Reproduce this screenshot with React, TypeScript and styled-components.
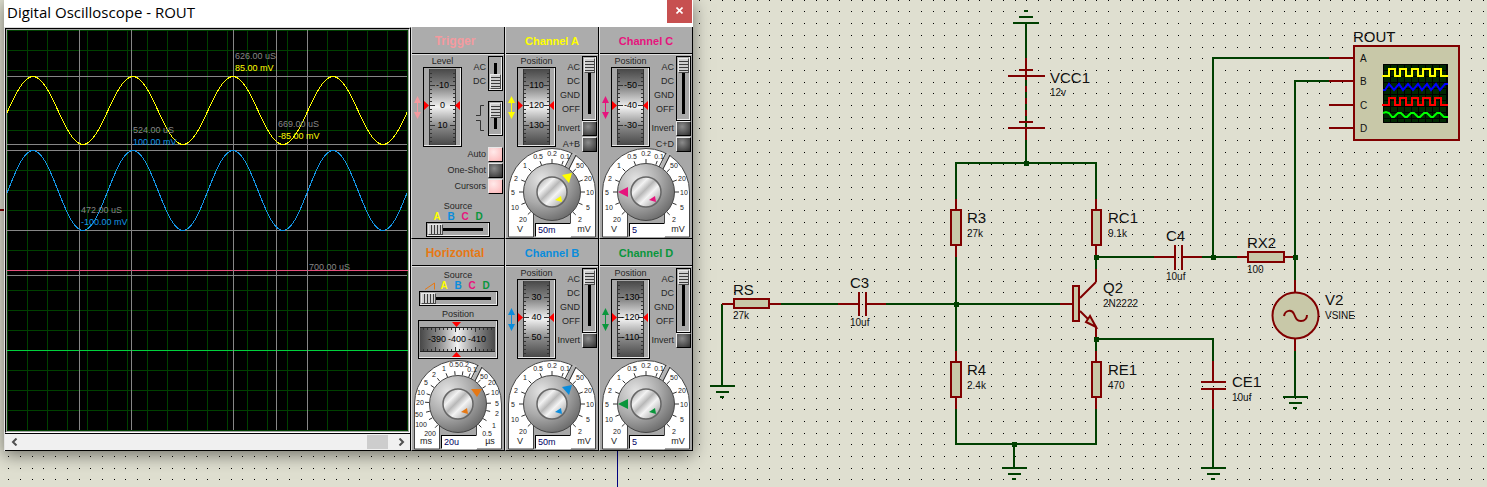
import React from "react";
import styled, { createGlobalStyle, css } from "styled-components";

const WIRE = "#004000";
const PART = "#800000";
const FILL = "#c8c8a8";

const COLORS = {
  trigger: "#f49a9f",
  horizontal: "#e67814",
  a: "#ffff00",
  b: "#0a8cdc",
  c: "#e6147d",
  d: "#0a963c",
};

const GlobalStyle = createGlobalStyle`
  * { box-sizing: border-box; }
  body {
    margin: 0;
    background: #dfdfd0;
    font-family: "Liberation Sans", Arial, sans-serif;
  }
  button, input { font-family: inherit; }
`;

/* ---------- Desktop and window ---------- */

const Desk = styled.main`
  position: relative;
  min-height: 100vh;
  overflow: hidden;
`;

const Sheet = styled.svg`
  position: absolute;
  inset: 0;
  width: 100%;
  height: 100%;
  font-family: "Liberation Sans", Arial, sans-serif;
`;

const Window = styled.section`
  position: absolute;
  left: 4px;
  top: 0;
  background: #ffffff;
  box-shadow: 0 4px 16px rgba(0, 0, 0, 0.5);
`;

const TitleBar = styled.header`
  display: flex;
  justify-content: space-between;
  height: 27px;
`;

const Title = styled.h1`
  margin: 0;
  padding-left: 3px;
  font: 400 15px/24px "Open Sans", "Noto Sans", sans-serif;
  color: #000;
`;

const CloseButton = styled.button`
  width: 25px;
  height: 23px;
  margin-right: 1px;
  padding: 0 0 2px;
  border: 0;
  background: #c75050;
  display: grid;
  place-items: center;
`;

const WindowBody = styled.div`
  display: flex;
`;

const ScopeColumn = styled.div`
  border-left: 1px solid #e3e3e3;
  border-right: 1px solid #000;
  border-top: 1px solid #dcdcdc;
`;

const ScreenFrame = styled.div`
  border: 1px solid #fff;
  border-top-color: #000;
  border-left-color: #000;
`;

const ScreenSvg = styled.svg`
  display: block;
  box-sizing: content-box;
  width: 401px;
  height: 401px;
  border: 1px solid #a0a0a0;
  background: #000;
  font-size: 9px;
`;

const ScrollBar = styled.div`
  display: flex;
  height: 18px;
  border-top: 1px solid #000;
  border-bottom: 1px solid #000;
  background: #f0f0f0;
`;

const ScrollArrow = styled.button`
  width: 18px;
  padding: 0;
  border: 0;
  background: none;
  display: grid;
  place-items: center;
`;

const ScrollTrack = styled.div`
  flex: 1;
  display: flex;
  justify-content: flex-end;
  padding: 1px 4px;
`;

const ScrollThumb = styled.div`
  width: 21px;
  background: #cdcdcd;
`;

/* ---------- Control panels ---------- */

const Panels = styled.div`
  display: grid;
  grid-template-columns: repeat(3, 94px);
`;

const PanelBox = styled.section`
  display: flex;
  flex-direction: column;
  height: 212px;
  border-left: 1px solid #dedede;
  border-right: 1px solid #000;
  border-bottom: 1px solid #000;
  background: #a8a8a8;
`;

const PanelTitle = styled.h2<{ $color: string; $wide?: boolean }>`
  margin: 0;
  height: 27px;
  padding: 2px ${(p) => (p.$wide ? 6 : 0)}px 0 0;
  border-bottom: 1px solid #000;
  background: #acacac;
  color: ${(p) => p.$color};
  font-size: ${(p) => (p.$wide ? 12 : 11)}px;
  line-height: 25px;
  text-align: center;
`;

const PanelBody = styled.div`
  flex: 1;
  display: flex;
  flex-direction: column;
  border-top: 1px solid #dedede;
`;

const TopRow = styled.div`
  display: flex;
  justify-content: space-between;
  height: 92px;
  padding: 0 1px 0 2px;
`;

const WheelGroup = styled.div`
  display: grid;
  grid-template-columns: 7px 39px;
  grid-template-rows: 12px 80px;
  column-gap: 2px;
  align-items: center;
`;

const Caption = styled.div`
  height: 12px;
  font-size: 9px;
  line-height: 12px;
  color: #262626;
  text-align: center;
  grid-column: 2;
`;

const WheelFrame = styled.div<{ $wide?: boolean }>`
  position: relative;
  width: ${(p) => (p.$wide ? 80 : 39)}px;
  height: ${(p) => (p.$wide ? 39 : 80)}px;
  border: 1px solid #000;
  box-shadow: inset -1px -1px 0 #e8e8e8;
  svg { display: block; font-size: 9px; }
`;

const HiddenRange = styled.input`
  position: absolute;
  inset: 0;
  width: 100%;
  height: 100%;
  margin: 0;
  opacity: 0;
`;

const Arrows = styled.svg`
  grid-row: 2;
`;

const SwitchColumn = styled.div`
  display: flex;
  flex-direction: column;
  align-items: flex-end;
  padding-top: 1px;
`;

const SwitchRow = styled.div<{ $gap?: number }>`
  display: flex;
  justify-content: flex-end;
  gap: 2px;
  margin-bottom: ${(p) => p.$gap ?? 0}px;
`;

const SwitchLabels = styled.div`
  padding-top: 4px;
  font-size: 9px;
  line-height: 14px;
  color: #262626;
  text-align: right;
`;

const thumb = css<{ $vertical?: boolean }>`
  appearance: none;
  width: ${(p) => (p.$vertical ? 11 : 15)}px;
  height: ${(p) => (p.$vertical ? 15 : 11)}px;
  border: 1px solid #4a4a4a;
  border-top-color: #e8e8e8;
  border-left-color: #e8e8e8;
  border-radius: 0;
  background: repeating-linear-gradient(
      ${(p) => (p.$vertical ? "180deg" : "90deg")},
      #cfcfcf 0 2px,
      #3c3c3c 2px 3px
    );
`;

const Slider = styled.input<{ $vertical?: boolean; $length: number }>`
  appearance: none;
  flex: none;
  margin: 0;
  padding: 1px;
  width: ${(p) => (p.$vertical ? 15 : p.$length)}px;
  height: ${(p) => (p.$vertical ? p.$length : 15)}px;
  writing-mode: ${(p) => (p.$vertical ? "vertical-lr" : "horizontal-tb")};
  border: 1px solid #000;
  box-shadow: inset -1px -1px 0 #eee;
  background: linear-gradient(#000, #000) center / ${(p) => (p.$vertical ? "3px calc(100% - 12px)" : "calc(100% - 12px) 3px")} no-repeat #a8a8a8;
  &::-webkit-slider-thumb { ${thumb} }
`;

const LampRow = styled.div`
  display: flex;
  align-items: center;
  justify-content: flex-end;
  gap: 2px;
  height: 15px;
  margin-bottom: 1px;
  font-size: 9px;
  line-height: 15px;
  color: #262626;
`;

const LampButton = styled.button<{ $on?: boolean }>`
  width: 15px;
  height: 15px;
  padding: 0;
  border: 1px solid #000;
  border-top-color: #e8e8e8;
  border-left-color: #e8e8e8;
  background: ${(p) =>
    p.$on
      ? "radial-gradient(circle at 35% 30%, #ffeaea, #fdb4b6)"
      : "radial-gradient(circle at 40% 35%, #8c8c8c, #2e2e2e)"};
`;

const LampStack = styled.div`
  padding-right: 1px;
  height: 53px;
`;

const SourceBlock = styled.div<{ $top?: number }>`
  display: flex;
  flex-direction: column;
  align-items: center;
  padding-top: ${(p) => p.$top ?? 0}px;
`;

const Letters = styled.div<{ $count: number }>`
  display: grid;
  grid-template-columns: repeat(${(p) => p.$count}, 14px);
  height: 10px;
  font-size: 10px;
  font-weight: 700;
  line-height: 10px;
  text-align: center;
`;

const Letter = styled.span<{ $color: string }>`
  color: ${(p) => p.$color};
`;

const DialBox = styled.div`
  position: relative;
  height: 90px;
  margin-top: 1px;
  svg { display: block; width: 92px; height: 90px; font-size: 7px; }
`;

const DialField = styled.input`
  position: absolute;
  left: 29px;
  bottom: 1px;
  width: 36px;
  height: 14px;
  padding: 0 0 0 2px;
  border: 1px solid #fff;
  border-top-color: #000;
  border-left-color: #000;
  background: #fff;
  color: #000064;
  font-size: 9px;
`;

/* ---------- Scope display ---------- */

const sine = (mid: number, amp: number) =>
  Array.from({ length: 201 }, (_, i) => {
    const x = i * 2;
    const y = mid - amp * Math.sin((2 * Math.PI * (x - 1)) / 100);
    return `${i ? "L" : "M"}${x} ${y.toFixed(1)}`;
  }).join("");

const gridLines = Array.from({ length: 21 }, (_, i) => `M${i * 20 + 0.5} 0V401M0 ${i * 20 + 0.5}H401`).join("");

function Screen() {
  const gray = "#868686";
  return (
    <ScreenFrame>
      <ScreenSvg role="img" aria-label="Oscilloscope traces">
        <path d={gridLines} stroke="#004000" shapeRendering="crispEdges" />
        <path d="M0 240.5H401" stroke="#e6507d" shapeRendering="crispEdges" />
        <path d="M0 320.5H401" stroke="#00d23c" shapeRendering="crispEdges" />
        <path
          d="M72.5 0V400M124.5 0V400M226.5 0V400M269.5 0V400M300.5 0V400M0 46.5H400M0 114.5H400M0 120.5H400M0 200.5H400M0 245.5H400"
          stroke={gray}
          shapeRendering="crispEdges"
        />
        <path d={sine(80.5, 34)} fill="none" stroke="#ffff00" shapeRendering="crispEdges" />
        <path d={sine(160.5, 40)} fill="none" stroke="#1496e6" shapeRendering="crispEdges" />
        <g fill={gray}>
          <text x="228" y="29">626.00 uS</text>
          <text x="271" y="97">669.00 uS</text>
          <text x="126" y="103">524.00 uS</text>
          <text x="74" y="183">472.00 uS</text>
          <text x="302" y="240">700.00 uS</text>
        </g>
        <g fill="#ffff00">
          <text x="228" y="41">85.00 mV</text>
          <text x="271" y="109">-85.00 mV</text>
        </g>
        <g fill="#1496e6">
          <text x="126" y="115">100.00 mV</text>
          <text x="74" y="195">-100.00 mV</text>
        </g>
      </ScreenSvg>
    </ScreenFrame>
  );
}

function Chevron({ flip }: { flip?: boolean }) {
  return (
    <svg width="7" height="8" viewBox="0 0 7 8" aria-hidden="true">
      <path d={flip ? "M1.5 .5L5 4L1.5 7.5" : "M5.5 .5L2 4L5.5 7.5"} fill="none" stroke="#505050" strokeWidth="2" />
    </svg>
  );
}

/* ---------- Wheels, arrows and dials ---------- */

function UpDown({ color }: { color: string }) {
  return (
    <Arrows width="7" height="23" viewBox="0 0 7 23" aria-hidden="true">
      <path d="M3.5 0L7 7H0ZM3.5 23L7 16H0Z" fill={color} />
      <path d="M3.5 6V17" stroke={color} />
    </Arrows>
  );
}

const wheelTicks = Array.from({ length: 18 }, (_, i) => {
  const y = 5.5 + i * 4;
  const long = i % 5 === 3;
  return `M6 ${y}h${long ? 5 : 2}M31 ${y}h${long ? -5 : -2}`;
}).join("");

function Wheel({ values, label, color }: { values: string[]; label: string; color: string }) {
  const id = React.useId();
  return (
    <WheelGroup>
      <Caption>{label}</Caption>
      <UpDown color={color} />
      <WheelFrame>
        <svg width="37" height="78" viewBox="0 0 37 78" aria-hidden="true">
          <defs>
            <linearGradient id={id} x2="0" y2="1">
              <stop offset="0" stopColor="#484848" />
              <stop offset=".25" stopColor="#8a8a8a" />
              <stop offset=".5" stopColor="#f2f2f2" />
              <stop offset=".75" stopColor="#8a8a8a" />
              <stop offset="1" stopColor="#484848" />
            </linearGradient>
          </defs>
          <rect x="5" y="1" width="27" height="76" fill={`url(#${id})`} />
          <path d="M5.5 1V77M31.5 1V77" stroke="#333" />
          <path d={wheelTicks} stroke="#333" shapeRendering="crispEdges" />
          <path d="M0 33L5 37.5L0 42ZM36 33L31 37.5L36 42Z" fill="#ff0000" />
          <g textAnchor="middle" fill="#000">
            {values.map((v, i) => (
              <text key={v} x="18.5" y={20 + i * 20}>{v}</text>
            ))}
          </g>
        </svg>
        <HiddenRange type="range" aria-label={label} />
      </WheelFrame>
    </WheelGroup>
  );
}

function WideWheel() {
  const ticks = Array.from({ length: 18 }, (_, i) => `M${4.5 + i * 4} 7v${i % 5 === 3 ? 4 : 2}M${4.5 + i * 4} 30v${i % 5 === 3 ? -4 : -2}`).join("");
  return (
    <WheelFrame $wide>
      <svg width="78" height="37" viewBox="0 0 78 37" aria-hidden="true">
        <defs>
          <linearGradient id="wide-wheel">
            <stop offset="0" stopColor="#484848" />
            <stop offset=".25" stopColor="#8a8a8a" />
            <stop offset=".5" stopColor="#f2f2f2" />
            <stop offset=".75" stopColor="#8a8a8a" />
            <stop offset="1" stopColor="#484848" />
          </linearGradient>
        </defs>
        <rect x="1" y="6" width="75" height="25" fill="url(#wide-wheel)" />
        <path d="M1 6.5H76M1 30.5H76" stroke="#222" />
        <path d={ticks} stroke="#333" shapeRendering="crispEdges" />
        <path d="M33 1H42L37.5 6ZM33 36H42L37.5 31Z" fill="#ff0000" />
        <g textAnchor="middle" fill="#000">
          <text x="18" y="21">-390</text>
          <text x="38" y="21">-400</text>
          <text x="58" y="21">-410</text>
        </g>
      </svg>
      <HiddenRange type="range" aria-label="Position" />
    </WheelFrame>
  );
}

type Mark = [string, number, number];

const VOLT_MARKS: Mark[] = [
  ["20", -29, 27], ["10", -37, 15], ["5", -39, 0], ["2", -36, -14], ["1", -27, -27],
  ["0.5", -14, -36], ["0.2", 0, -39], ["0.1", 13, -36],
  ["50", 28, -27], ["20", 36, -14], ["10", 38, 0], ["5", 36, 15], ["2", 28, 27],
];

const TIME_MARKS: Mark[] = [
  ["200", -28, 29], ["100", -37, 20], ["50", -39, 10], ["20", -38, -2], ["10", -37, -12], ["5", -32, -22],
  ["2", -24, -30], ["1", -14, -36], ["0.5", -4, -40], ["0.2", 6, -40], ["0.1", 14, -35],
  ["50", 26, -28], ["20", 34, -22], ["10", 37, -12], ["5", 39, -1], ["2", 39, 9], ["1", 36, 21], ["0.5", 29, 29],
];

const POINTERS = {
  fine: "10,-17 20,-19 17,-9",
  coarse: "-28,0 -18,-5 -18,5",
  time: "13,-15 24,-15 19,-7",
};

interface DialProps {
  name: string;
  marks: Mark[];
  left: string;
  right: string;
  value: string;
  color: string;
  pointer: keyof typeof POINTERS;
}

function Dial({ name, marks, left, right, value, color, pointer }: DialProps) {
  const id = React.useId();
  const ticks = marks
    .map(([, x, y]) => {
      const r = Math.hypot(x, y);
      return `M${(x / r) * 29} ${(y / r) * 29}L${(x / r) * 33} ${(y / r) * 33}`;
    })
    .join("");
  return (
    <DialBox>
      <svg viewBox="-46 -44 92 90" aria-hidden="true">
        <defs>
          <radialGradient id={`${id}k`} cx=".32" cy=".28" r=".85">
            <stop offset="0" stopColor="#e4e4e4" />
            <stop offset=".5" stopColor="#aaaaaa" />
            <stop offset="1" stopColor="#606060" />
          </radialGradient>
          <linearGradient id={`${id}c`} x2="1" y2="1">
            <stop offset="0" stopColor="#8e8e8e" />
            <stop offset=".3" stopColor="#f2f2f2" />
            <stop offset=".45" stopColor="#b8b8b8" />
            <stop offset=".6" stopColor="#f4f4f4" />
            <stop offset="1" stopColor="#888" />
          </linearGradient>
        </defs>
        <path
          d="M-43.5 45V0A43.5 43.5 0 0 1 43.5 0V45H18.5V20H-18.5V45Z"
          fill="#fff"
          stroke="#444"
        />
        <rect x="-18" y="20" width="36" height="26" fill="#a8a8a8" />
        <path d="M21 -40L14 -25L17 -23L25 -38Z" fill="#b4b4b4" />
        <path d="M20 -39L13 -25M24 -37L17 -23" stroke="#222" />
        <path d={ticks} stroke="#333" />
        <circle r="28.5" fill={`url(#${id}k)`} stroke="#444" />
        <circle r="15" fill={`url(#${id}c)`} stroke="#666" strokeWidth="1.5" />
        <polygon points={POINTERS[pointer]} fill={color} />
        <polygon points="3,8 9,4 10,10" fill={color} />
        <g textAnchor="middle" fill="#222">
          {marks.map(([t, x, y]) => (
            <text key={`${t}${x}`} x={x} y={y + 3}>{t}</text>
          ))}
          <g fontSize="9">
            <text x="-32" y="40">{left}</text>
            <text x="32" y="40">{right}</text>
          </g>
        </g>
      </svg>
      <DialField type="text" defaultValue={value} aria-label={`${name} scale`} />
    </DialBox>
  );
}

function Lamp({ label, on }: { label: string; on?: boolean }) {
  const id = React.useId();
  return (
    <LampRow>
      <label htmlFor={id}>{label}</label>
      <LampButton id={id} type="button" $on={on} aria-pressed={!!on} />
    </LampRow>
  );
}

/* ---------- Panels ---------- */

interface ChannelProps {
  name: string;
  color: string;
  values: string[];
  value: string;
  pointer: keyof typeof POINTERS;
  sum?: string;
}

function Channel({ name, color, values, value, pointer, sum }: ChannelProps) {
  return (
    <PanelBox>
      <PanelTitle $color={color}>{name}</PanelTitle>
      <PanelBody>
        <TopRow>
          <Wheel label="Position" values={values} color={color} />
          <SwitchColumn>
            <SwitchRow>
              <SwitchLabels>AC<br />DC<br />GND<br />OFF</SwitchLabels>
              <Slider type="range" min="0" max="3" defaultValue="0" $vertical $length={65} aria-label={`${name} coupling`} />
            </SwitchRow>
            <Lamp label="Invert" />
            {sum && <Lamp label={sum} />}
          </SwitchColumn>
        </TopRow>
        <Dial name={name} marks={VOLT_MARKS} left="V" right="mV" value={value} color={color} pointer={pointer} />
      </PanelBody>
    </PanelBox>
  );
}

const sources = (
  <>
    <Letter $color={COLORS.a}>A</Letter>
    <Letter $color={COLORS.b}>B</Letter>
    <Letter $color={COLORS.c}>C</Letter>
    <Letter $color={COLORS.d}>D</Letter>
  </>
);

function Trigger() {
  return (
    <PanelBox>
      <PanelTitle $color={COLORS.trigger} $wide>Trigger</PanelTitle>
      <PanelBody>
        <TopRow>
          <Wheel label="Level" values={["-10", "0", "10"]} color={COLORS.trigger} />
          <SwitchColumn>
            <SwitchRow $gap={10}>
              <SwitchLabels>AC<br />DC</SwitchLabels>
              <Slider type="range" min="0" max="1" defaultValue="1" $vertical $length={35} aria-label="Trigger coupling" />
            </SwitchRow>
            <SwitchRow>
              <svg width="10" height="35" viewBox="0 0 10 35" aria-hidden="true">
                <path d="M0 14.5H4.5V4.5H8M0 19.5H4.5V29.5H8" fill="none" stroke="#333" />
              </svg>
              <Slider type="range" min="0" max="1" defaultValue="0" $vertical $length={35} aria-label="Trigger edge" />
            </SwitchRow>
          </SwitchColumn>
        </TopRow>
        <LampStack>
          <Lamp label="Auto" on />
          <Lamp label="One-Shot" />
          <Lamp label="Cursors" on />
        </LampStack>
        <SourceBlock>
          <Caption>Source</Caption>
          <Letters $count={4}>{sources}</Letters>
          <Slider type="range" min="0" max="3" defaultValue="0" $length={64} aria-label="Trigger source" />
        </SourceBlock>
      </PanelBody>
    </PanelBox>
  );
}

function Horizontal() {
  return (
    <PanelBox>
      <PanelTitle $color={COLORS.horizontal} $wide>Horizontal</PanelTitle>
      <PanelBody>
        <SourceBlock $top={2}>
          <Caption>Source</Caption>
          <Letters $count={5}>
            <svg width="14" height="10" viewBox="0 0 14 10" aria-hidden="true">
              <path d="M2 8.5L11.5 2V8.5" fill="none" stroke={COLORS.horizontal} />
            </svg>
            {sources}
          </Letters>
          <Slider type="range" min="0" max="4" defaultValue="0" $length={79} aria-label="Horizontal source" />
        </SourceBlock>
        <SourceBlock $top={2}>
          <Caption>Position</Caption>
          <WideWheel />
        </SourceBlock>
        <Dial name="Horizontal" marks={TIME_MARKS} left="ms" right="µs" value="20u" color={COLORS.horizontal} pointer="time" />
      </PanelBody>
    </PanelBox>
  );
}

/* ---------- Schematic ---------- */

const gridDots = Array.from({ length: 100 }, (_, i) => {
  const x = Math.floor(((i % 10) * 117) / 10 + 0.8);
  const y = Math.floor((Math.floor(i / 10) * 117) / 10 + 0.2);
  return `M${x} ${y}h1v1h-1z`;
}).join("");

function Label({ x, y, name, value, vy }: { x: number; y: number; name: string; value?: string; vy?: number }) {
  return (
    <>
      <text x={x} y={y} fontSize="15">{name}</text>
      {value && <text x={x} y={vy ?? y + 14} fontSize="10">{value}</text>}
    </>
  );
}

const ground = (x: number, y: number) => `M${x - 12} ${y}h25M${x - 6} ${y + 6}h13M${x - 2} ${y + 11}h4`;
const square = (y: number) =>
  `M1382 ${y + 7}H1389V${y}H1395V${y + 7}H1400V${y}H1406V${y + 7}H1412V${y}H1418V${y + 7}H1423V${y}H1430V${y + 7}H1435V${y}H1441V${y + 7}H1448`;
const zigzag = "M1383 90h2l4 -6l5 6l5 -6l4 6l5 -6l5 6l5 -6l4 6l5 -6l4 6l5 -6l4 6l5 -6h3";
const ripple = "M1383 113l3 -1l3 1l3 4h2l4 -4h3l4 4h2l4 -4h3l4 4h2l4 -4h3l4 4h2l4 -4h3l4 4h4";
const screenGrid =
  Array.from({ length: 9 }, (_, i) => `M${1390.5 + i * 7} 64V123`).join("") +
  Array.from({ length: 9 }, (_, i) => `M1383 ${70.5 + i * 6}H1448`).join("");

const junctions: [number, number][] = [
  [1026, 163], [956, 304], [1096, 257], [1096, 339], [1014, 444], [1213, 257], [1295, 257],
];

function Schematic() {
  return (
    <Sheet role="img" aria-label="Amplifier schematic">
      <defs>
        <pattern id="dots" x="8" y="0" width="117" height="117" patternUnits="userSpaceOnUse">
          <path d={gridDots} fill="#000" shapeRendering="crispEdges" />
        </pattern>
      </defs>
      <rect width="100%" height="100%" fill="#dfdfd0" />
      <rect width="100%" height="100%" fill="url(#dots)" />
      <path d="M0 210H8" stroke={PART} strokeWidth="2" />
      <path d="M617.5 440V487" stroke="#000080" shapeRendering="crispEdges" />

      <g fill="none" strokeWidth="2" shapeRendering="crispEdges">
        <path
          stroke={WIRE}
          d={
            "M1026 23V163M956 199V163H1096V199M956 257V351M956 409V444H1096V409M1014 444V468" +
            "M1096 257V269M1096 339V351M1096 257H1154M1202 257H1237M1213 257V58H1329M1329 81H1295V280" +
            "M1295 351V397M1096 339H1213V361M1213 409V468M956 304H1060M722 386V304M781 304H838M886 304H956" +
            "M1013 23h26M1019 17h14M1024 11h4" +
            ground(1014, 468) + ground(1213, 468) + ground(1295, 397) + ground(722, 386)
          }
        />
        <path
          stroke={PART}
          d={
            "M1026 58V76M1026 128V140M1008 76h37M1019 70h14M1008 128h37M1019 122h14" +
            "M956 199V210M956 245V257M956 351V362M956 397V409M1096 199V210M1096 245V257M1096 351V362M1096 397V409" +
            "M1096 269V282M1096 327V338M1060 304H1073" +
            "M1154 257H1174M1183 257H1202M1175 245V270M1182 245V270M1237 257H1248M1284 257H1294" +
            "M1295 280V293M1295 338V351M1213 361V382M1213 389V409M1201 382h25M1201 389h25" +
            "M722 304H734M769 304H781M838 304H858M867 304H886M859 292V316M866 292V316" +
            "M1329 58H1354M1329 81H1354M1329 105H1354M1329 128H1354"
          }
        />
        <path stroke={PART} d="M1026 76V122" strokeDasharray="6 6" strokeDashoffset="2" />
      </g>

      <g fill={FILL} stroke={PART} strokeWidth="2">
        <rect x="951" y="210" width="10" height="35" />
        <rect x="951" y="362" width="10" height="35" />
        <rect x="1092" y="210" width="9" height="35" />
        <rect x="1092" y="362" width="9" height="35" />
        <rect x="1248" y="252" width="36" height="10" />
        <rect x="734" y="299" width="35" height="9" />
        <rect x="1073" y="286" width="6" height="35" />
        <path d="M1080 298L1096 282M1080 311L1096 327" />
        <path d="M1090 316L1086 322L1096 327Z" />
        <circle cx="1295.5" cy="315.5" r="23" />
        <path d="M1284 316C1285 310 1292 309 1294 314S1297 321 1301 321S1307 318 1307 315" fill="none" />
        <rect x="1354" y="46" width="105" height="94" />
      </g>

      <g fill={WIRE}>
        {junctions.map(([x, y]) => (
          <rect key={`${x}-${y}`} x={x - 2} y={y - 2} width="5" height="5" />
        ))}
      </g>

      <rect x="1383" y="64" width="65" height="59" fill="#002800" />
      <g fill="none" strokeWidth="2">
        <path d={screenGrid} stroke="#000" strokeWidth="1" />
        <path d="M1383.5 64.5h64v58h-64z" stroke="#000" strokeWidth="1" />
        <path d={square(69)} stroke="#ffff00" />
        <path d={zigzag} stroke="#0000ff" />
        <path d={square(98)} stroke="#ff0000" />
        <path d={ripple} stroke="#00ff00" />
      </g>

      <g fill="#111">
        <Label x={1050} y={83} name="VCC1" value="12v" vy={96} />
        <Label x={967} y={223} name="R3" value="27k" />
        <Label x={967} y={375} name="R4" value="2.4k" />
        <Label x={1108} y={223} name="RC1" value="9.1k" />
        <Label x={1108} y={375} name="RE1" value="470" />
        <Label x={1103} y={293} name="Q2" value="2N2222" />
        <Label x={1166} y={241} name="C4" value="10uf" vy={280} />
        <Label x={1247} y={248} name="RX2" value="100" vy={273} />
        <Label x={1325} y={305} name="V2" value="VSINE" />
        <Label x={1232} y={387} name="CE1" value="10uf" />
        <Label x={733} y={295} name="RS" value="27k" vy={319} />
        <Label x={850} y={288} name="C3" value="10uf" vy={326} />
        <Label x={1353} y={42} name="ROUT" />
        <g fontSize="10">
          <text x="1360" y="62">A</text>
          <text x="1360" y="85">B</text>
          <text x="1360" y="109">C</text>
          <text x="1360" y="132">D</text>
        </g>
      </g>
    </Sheet>
  );
}

export default function App() {
  return (
    <Desk>
      <GlobalStyle />
      <Schematic />
      <Window>
        <TitleBar>
          <Title>Digital Oscilloscope - ROUT</Title>
          <CloseButton type="button" aria-label="Close">
            <svg width="7" height="7" viewBox="0 0 7 7" aria-hidden="true">
              <path d="M.5 .5L6.5 6.5M6.5 .5L.5 6.5" stroke="#fff" strokeWidth="1.6" />
            </svg>
          </CloseButton>
        </TitleBar>
        <WindowBody>
          <ScopeColumn>
            <Screen />
            <ScrollBar>
              <ScrollArrow type="button" aria-label="Scroll left"><Chevron /></ScrollArrow>
              <ScrollTrack><ScrollThumb /></ScrollTrack>
              <ScrollArrow type="button" aria-label="Scroll right"><Chevron flip /></ScrollArrow>
            </ScrollBar>
          </ScopeColumn>
          <Panels>
            <Trigger />
            <Channel name="Channel A" color={COLORS.a} values={["110", "120", "130"]} value="50m" pointer="fine" sum="A+B" />
            <Channel name="Channel C" color={COLORS.c} values={["-50", "-40", "-30"]} value="5" pointer="coarse" sum="C+D" />
            <Horizontal />
            <Channel name="Channel B" color={COLORS.b} values={["30", "40", "50"]} value="50m" pointer="fine" />
            <Channel name="Channel D" color={COLORS.d} values={["-130", "-120", "-110"]} value="5" pointer="coarse" />
          </Panels>
        </WindowBody>
      </Window>
    </Desk>
  );
}
